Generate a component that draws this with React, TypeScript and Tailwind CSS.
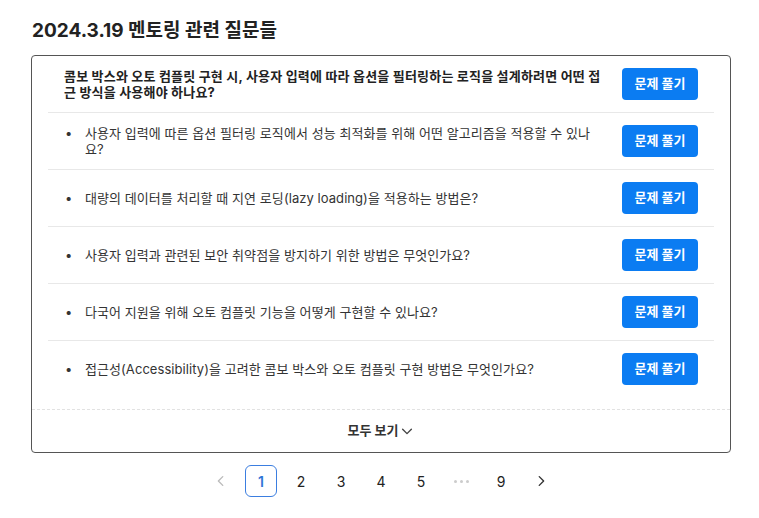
import React from 'react';

const font = { fontFamily: 'Inter, "Noto Sans CJK KR", sans-serif' };

const main =
  '콤보 박스와 오토 컴플릿 구현 시, 사용자 입력에 따라 옵션을 필터링하는 로직을 설계하려면 어떤 접근 방식을 사용해야 하나요?';

const subs = [
  '사용자 입력에 따른 옵션 필터링 로직에서 성능 최적화를 위해 어떤 알고리즘을 적용할 수 있나요?',
  '대량의 데이터를 처리할 때 지연 로딩(lazy loading)을 적용하는 방법은?',
  '사용자 입력과 관련된 보안 취약점을 방지하기 위한 방법은 무엇인가요?',
  '다국어 지원을 위해 오토 컴플릿 기능을 어떻게 구현할 수 있나요?',
  '접근성(Accessibility)을 고려한 콤보 박스와 오토 컴플릿 구현 방법은 무엇인가요?'
];

const SolveButton = () => (
  <button className="shrink-0 w-[76px] h-8 rounded-[4px] bg-[#0b7cf2] text-white text-[13px] font-bold">
    문제 풀기
  </button>
);

const Chevron = ({ dir, color }: { dir: 'left' | 'right' | 'down'; color: string }) => {
  const d =
    dir === 'left' ? 'M10 3 L5 8 L10 13' : dir === 'right' ? 'M6 3 L11 8 L6 13' : 'M3 6 L8 11 L13 6';
  return (
    <svg width="14" height="14" viewBox="0 0 16 16" fill="none">
      <path d={d} stroke={color} strokeWidth="1.6" strokeLinecap="round" strokeLinejoin="round" />
    </svg>
  );
};

export default function App() {
  const pages = ['1', '2', '3', '4', '5', '...', '9'];
  return (
    <div className="bg-white w-[759px] h-[518px] pl-[31px] pr-[28px] pt-[19px]" style={font}>
      <h1 className="text-[19px] font-bold text-[#222] leading-6 pl-[1px]">
        2024.3.19 멘토링 관련 질문들
      </h1>
      <div className="mt-3 border border-[#555] rounded-[4px]">
        <div className="px-4 pb-3">
          <div className="flex items-center gap-[18px] px-4 py-3 border-b border-[#e8e8e8]">
            <p className="flex-1 text-[13px] font-bold text-[#222] leading-4 tracking-[0.2px]">{main}</p>
            <SolveButton />
          </div>
          {subs.map((q, i) => (
            <div
              key={q}
              className={`flex items-center gap-[18px] px-4 py-3 ${i < subs.length - 1 ? 'border-b border-[#e8e8e8]' : ''}`}
            >
              <div className="flex-1 flex items-start text-[13px] text-[#333] leading-4 tracking-[0.06px]">
                <span className="w-[21px] shrink-0 pl-[1px]">•</span>
                <p className="flex-1">{q}</p>
              </div>
              <SolveButton />
            </div>
          ))}
        </div>
        <div className="border-t border-dashed border-[#e2e2e2] h-[43px] flex items-center justify-center gap-[2px]">
          <span className="text-[13px] font-bold text-[#333]">모두 보기</span>
          <Chevron dir="down" color="#444" />
        </div>
      </div>
      <div className="mt-3 flex items-center justify-center gap-2">
        <div className="w-8 h-8 flex items-center justify-center">
          <Chevron dir="left" color="#bbb" />
        </div>
        {pages.map((p) =>
          p === '...' ? (
            <div key={p} className="w-8 h-8 flex items-center justify-center gap-[3px]">
              <span className="w-[3px] h-[3px] rounded-full bg-[#ccc]" />
              <span className="w-[3px] h-[3px] rounded-full bg-[#ccc]" />
              <span className="w-[3px] h-[3px] rounded-full bg-[#ccc]" />
            </div>
          ) : (
            <div
              key={p}
              className={`w-8 h-8 flex items-center justify-center text-[14px] rounded-md ${
                p === '1' ? 'border border-[#3b7ee0] text-[#2f74d6] font-semibold' : 'text-[#222]'
              }`}
            >
              {p}
            </div>
          )
        )}
        <div className="w-8 h-8 flex items-center justify-center">
          <Chevron dir="right" color="#333" />
        </div>
      </div>
    </div>
  );
}
